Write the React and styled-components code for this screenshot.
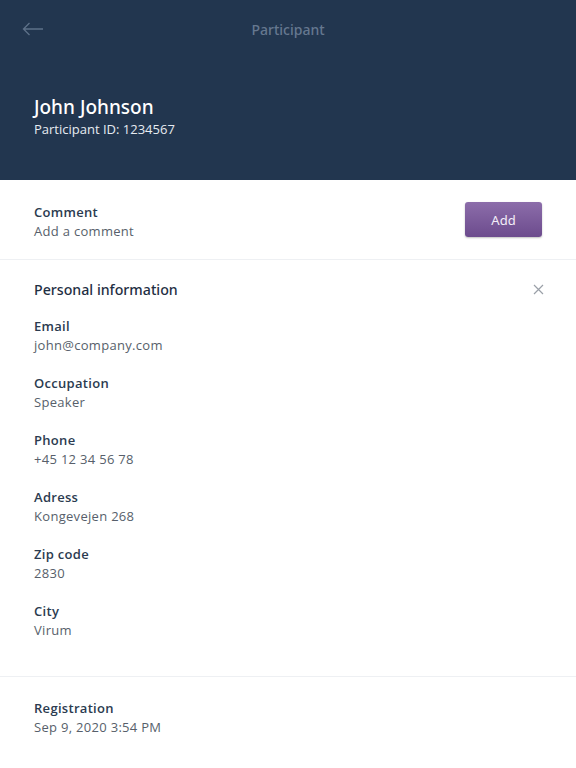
import React from "react";
import styled, { createGlobalStyle } from "styled-components";

const Global = createGlobalStyle`
  html, body { margin: 0; padding: 0; background: #ffffff; }
  body { font-family: "Open Sans", "Noto Sans", sans-serif; -webkit-font-smoothing: antialiased; }
  * { box-sizing: border-box; }
`;

const Page = styled.div`
  width: 576px;
  min-height: 768px;
  background: #ffffff;
`;

const Header = styled.header`
  background: #22364f;
  height: 180px;
  padding: 0 34px;
  display: flex;
  flex-direction: column;
`;

const TopBar = styled.div`
  height: 58px;
  display: grid;
  grid-template-columns: 1fr auto 1fr;
  align-items: center;
  margin: 0 -12px;
`;

const BackButton = styled.button`
  background: none;
  border: 0;
  padding: 0;
  width: 22px;
  height: 16px;
  display: flex;
  align-items: center;
  color: #5e7189;
  cursor: pointer;
`;

const Title = styled.div`
  font-family: "Noto Sans", sans-serif;
  font-size: 14px;
  color: #66788f;
  font-weight: 500;
`;

const Identity = styled.div`
  margin-top: 36px;
  display: flex;
  flex-direction: column;
`;

const Name = styled.h1`
  margin: 0;
  font-family: "Noto Sans", sans-serif;
  font-size: 19px;
  font-weight: 500;
  color: #ffffff;
  line-height: 26px;
`;

const Sub = styled.div`
  font-size: 13px;
  color: #e6ebf1;
  line-height: 18px;
`;

const Section = styled.section`
  padding: ${(p) => p.$pad || "22px 34px"};
  border-bottom: ${(p) => (p.$divider ? "1px solid #eef0f3" : "none")};
`;

const Row = styled.div`
  display: flex;
  align-items: flex-start;
  justify-content: space-between;
`;

const Field = styled.div`
  display: flex;
  flex-direction: column;
`;

const Label = styled.div`
  font-size: 13px;
  font-weight: 600;
  letter-spacing: 0.3px;
  color: #2b3b50;
  line-height: 19px;
`;

const Value = styled.div`
  font-size: 13px;
  letter-spacing: 0.3px;
  color: #575f6b;
  line-height: 19px;
`;

const AddButton = styled.button`
  width: 77px;
  height: 35px;
  margin-top: -1px;
  border: 0;
  border-radius: 3px;
  background: linear-gradient(#8c6daa, #6c4b8d);
  box-shadow: 0 1px 2px rgba(0, 0, 0, 0.25);
  color: #f3eef8;
  font-family: "Noto Sans", sans-serif;
  font-size: 13px;
  cursor: pointer;
`;

const SectionHead = styled.div`
  display: flex;
  align-items: center;
  justify-content: space-between;
  margin-bottom: 18px;
`;

const SectionTitle = styled.h2`
  margin: 0;
  font-family: "Noto Sans", sans-serif;
  font-size: 14.2px;
  font-weight: 500;
  color: #1f2f44;
`;

const CloseButton = styled.button`
  background: none;
  border: 0;
  padding: 0;
  width: 12px;
  height: 12px;
  margin-right: -3px;
  display: flex;
  color: #9aa0a8;
  cursor: pointer;
`;

const FieldList = styled.div`
  display: flex;
  flex-direction: column;
  gap: 19px;
`;

const fields = [
  ["Email", "john@company.com"],
  ["Occupation", "Speaker"],
  ["Phone", "+45 12 34 56 78"],
  ["Adress", "Kongevejen 268"],
  ["Zip code", "2830"],
  ["City", "Virum"],
];

export default function App() {
  return (
    <Page>
      <Global />
      <Header>
        <TopBar>
          <BackButton aria-label="Back">
            <svg width="22" height="14" viewBox="0 0 22 14" fill="none" stroke="currentColor" strokeWidth="1.3">
              <path d="M21 7H1.5M7.5 1L1.5 7l6 6" />
            </svg>
          </BackButton>
          <Title>Participant</Title>
          <span />
        </TopBar>
        <Identity>
          <Name>John Johnson</Name>
          <Sub>Participant ID: 1234567</Sub>
        </Identity>
      </Header>

      <Section $divider $pad="23px 34px 18px">
        <Row>
          <Field>
            <Label>Comment</Label>
            <Value>Add a comment</Value>
          </Field>
          <AddButton>Add</AddButton>
        </Row>
      </Section>

      <Section $divider $pad="20px 34px 36px">
        <SectionHead>
          <SectionTitle>Personal information</SectionTitle>
          <CloseButton aria-label="Close">
            <svg width="11" height="11" viewBox="0 0 11 11" stroke="currentColor" strokeWidth="1.2">
              <path d="M1 1l9 9M10 1l-9 9" />
            </svg>
          </CloseButton>
        </SectionHead>
        <FieldList>
          {fields.map(([l, v]) => (
            <Field key={l}>
              <Label>{l}</Label>
              <Value>{v}</Value>
            </Field>
          ))}
        </FieldList>
      </Section>

      <Section $pad="22px 34px">
        <Field>
          <Label>Registration</Label>
          <Value>Sep 9, 2020 3:54 PM</Value>
        </Field>
      </Section>
    </Page>
  );
}
